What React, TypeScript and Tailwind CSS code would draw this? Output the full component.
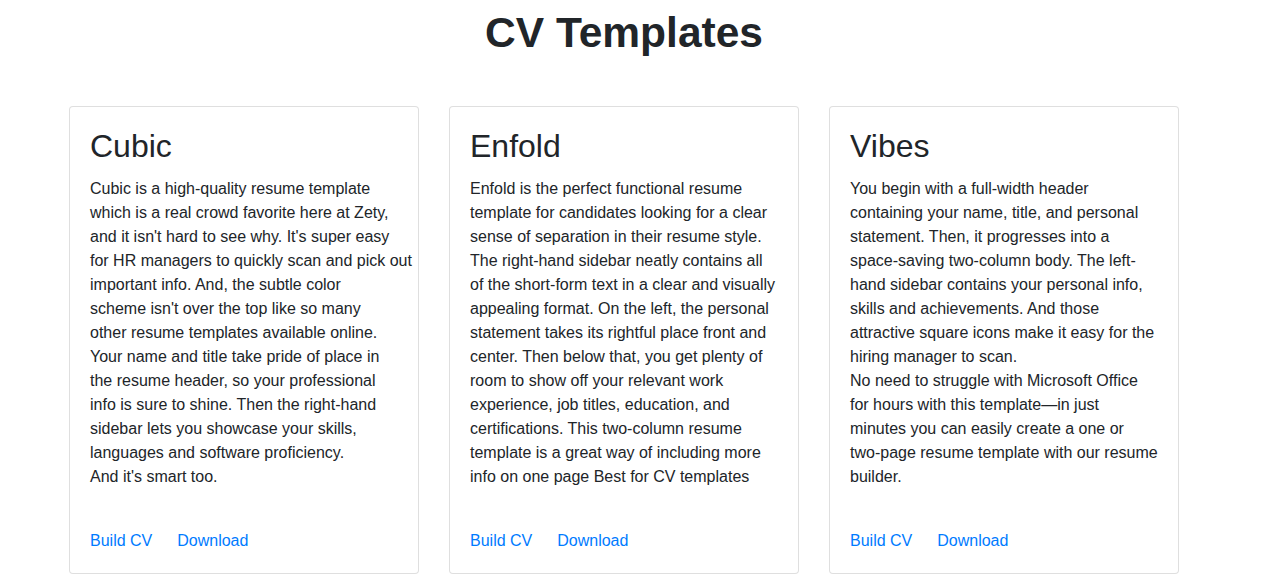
import type { ReactNode } from 'react';

const templates: { name: string; body: ReactNode }[] = [
  {
    name: 'Cubic',
    body: (
      <>
        Cubic is a high-quality resume template which is a real crowd favorite here at Zety, and it
        isn't hard to see why. It's super easy{' '}
        <span className="whitespace-nowrap">for HR managers to quickly scan and pick out</span> important
        info. And, the subtle color scheme isn't over the top like so many other resume templates
        available online. Your name and title take pride of place in the resume header, so your
        professional info is sure to shine. Then the right-hand sidebar lets you showcase your skills,
        languages and software proficiency.
        <br />
        And it's smart too.
      </>
    ),
  },
  {
    name: 'Enfold',
    body: (
      <>
        Enfold is the perfect functional resume template for candidates looking for a clear sense of
        separation in their resume style. The right-hand sidebar neatly contains all of the short-form
        text in a clear and visually appealing format. On the left, the personal statement takes its
        rightful place front and center. Then below that, you get plenty of room to show off your
        relevant work experience, job titles, education, and certifications. This two-column resume
        template is a great way of including more info on one page Best for CV templates
      </>
    ),
  },
  {
    name: 'Vibes',
    body: (
      <>
        You begin with a full-width header containing your name, title, and personal statement. Then,
        it progresses into a space-saving two-column body. The left-hand sidebar contains your personal
        info, skills and achievements. And those attractive square icons make it easy for the hiring
        manager to scan.
        <br />
        No need to struggle with Microsoft Office for hours with this template{'\u2014'}in just minutes
        you can easily create a one or two-page resume template with our resume builder.
      </>
    ),
  },
];

function TemplateCard({ name, body }: { name: string; body: ReactNode }) {
  return (
    <div className="w-[350px] flex flex-col bg-white border border-black/[0.125] rounded p-5">
      <h2 className="text-[32px] leading-[38px] font-normal mb-3">{name}</h2>
      <p className="text-base leading-6">{body}</p>
      <div className="mt-auto pt-10 flex gap-[25px] text-base leading-6 text-[#007bff]">
        <a href="#">Build CV</a>
        <a href="#">Download</a>
      </div>
    </div>
  );
}

export default function App() {
  return (
    <div className="w-[1248px] min-h-screen bg-white text-[#212529] font-['Liberation_Sans',Arial,sans-serif]">
      <h1 className="mt-[8px] text-center text-[42.5px] leading-[50px] font-bold">CV Templates</h1>
      <div className="mt-[48px] flex justify-center gap-[30px]">
        {templates.map((t) => (
          <TemplateCard key={t.name} name={t.name} body={t.body} />
        ))}
      </div>
    </div>
  );
}
